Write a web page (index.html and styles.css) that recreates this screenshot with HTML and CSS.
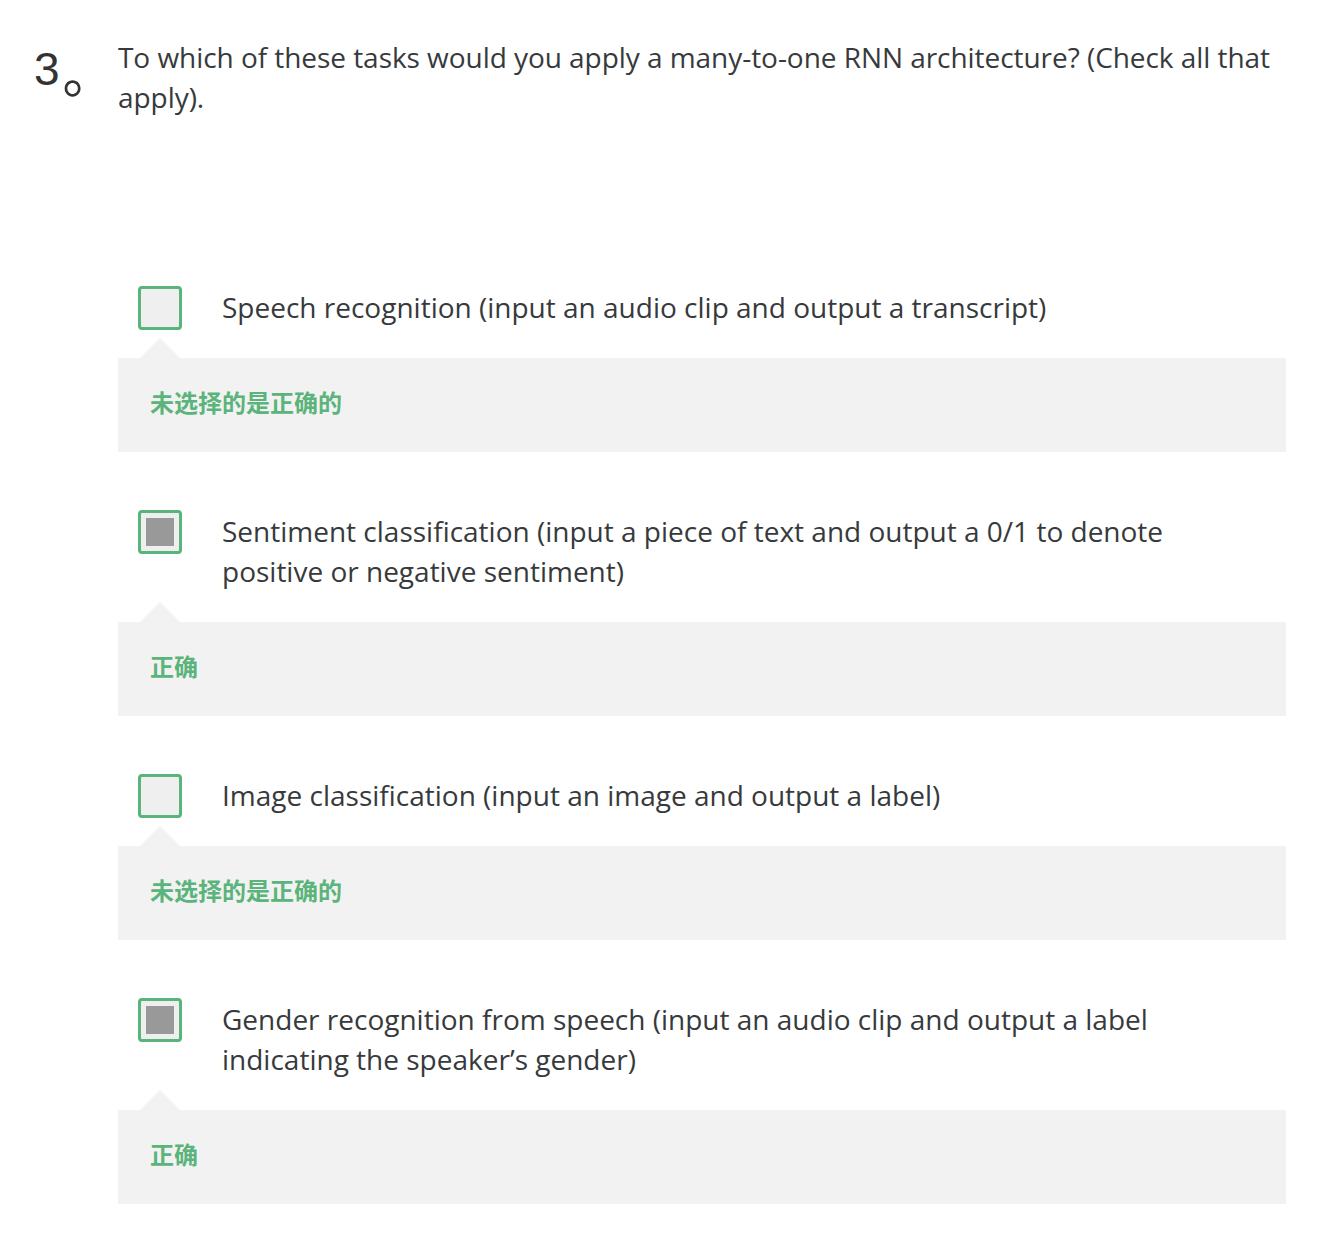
FILE: index.html
```html
<!DOCTYPE html>
<html lang="zh-CN">
<head>
<meta charset="utf-8">
<link rel="stylesheet" href="styles.css">
</head>
<body>
<div class="question">
  <div class="qnum">3<span class="qdot">。</span></div>
  <div class="qbody">
    <div class="qtext">To which of these tasks would you apply a many-to-one RNN architecture? (Check all that apply).</div>
    <div class="options">
      <div class="option">
        <div class="row">
          <span class="box"></span>
          <div class="label">Speech recognition (input an audio clip and output a transcript)</div>
        </div>
        <div class="feedback">未选择的是正确的</div>
      </div>
      <div class="option">
        <div class="row">
          <span class="box checked"></span>
          <div class="label">Sentiment classification (input a piece of text and output a 0/1 to denote positive or negative sentiment)</div>
        </div>
        <div class="feedback">正确</div>
      </div>
      <div class="option">
        <div class="row">
          <span class="box"></span>
          <div class="label">Image classification (input an image and output a label)</div>
        </div>
        <div class="feedback">未选择的是正确的</div>
      </div>
      <div class="option">
        <div class="row">
          <span class="box checked"></span>
          <div class="label">Gender recognition from speech (input an audio clip and output a label indicating the speaker’s gender)</div>
        </div>
        <div class="feedback">正确</div>
      </div>
    </div>
  </div>
</div>
</body>
</html>
```
FILE: styles.css
```css
html, body {
  margin: 0;
  padding: 0;
  background: #ffffff;
}
body {
  font-family: "Open Sans", "Noto Sans CJK SC", sans-serif;
  color: #373a3c;
}
.question {
  display: flex;
  padding: 37px 46px 0 34px;
}
.qnum {
  width: 84px;
  flex: none;
  padding-top: 2px;
  font-family: "Liberation Sans", sans-serif;
  font-size: 46px;
  line-height: 60px;
  color: #333;
  white-space: nowrap;
}
.qdot {
  font-family: "Noto Sans CJK SC", sans-serif;
  font-size: 52px;
  margin-left: 3px;
  vertical-align: -8px;
  line-height: 0;
}
.qbody {
  flex: 1;
}
.qtext {
  font-size: 28px;
  line-height: 40px;
  letter-spacing: -0.05px;
}
.options {
  margin-top: 169px;
  display: flex;
  flex-direction: column;
  gap: 58px;
}
.row {
  display: flex;
  align-items: flex-start;
  padding-left: 20px;
  padding-right: 70px;
}
.box {
  flex: none;
  width: 44px;
  height: 44px;
  box-sizing: border-box;
  border: 3px solid #5ab47b;
  border-radius: 4px;
  background: #efefef;
  padding: 5px;
  display: flex;
}
.box.checked::before {
  content: "";
  flex: 1;
  background: #999999;
}
.label {
  margin-left: 40px;
  padding-top: 1px;
  padding-bottom: 3px;
  font-size: 28px;
  line-height: 40px;
}
.feedback {
  position: relative;
  margin-top: 28px;
  background: #f2f2f2;
  padding: 29px 32px 35px;
  font-family: "Noto Sans CJK SC", sans-serif;
  font-weight: 700;
  font-size: 24px;
  line-height: 30px;
  color: #5ab47b;
}
.feedback::before {
  content: "";
  position: absolute;
  left: 22px;
  top: -20px;
  border-left: 20px solid transparent;
  border-right: 20px solid transparent;
  border-bottom: 20px solid #f2f2f2;
}
```
